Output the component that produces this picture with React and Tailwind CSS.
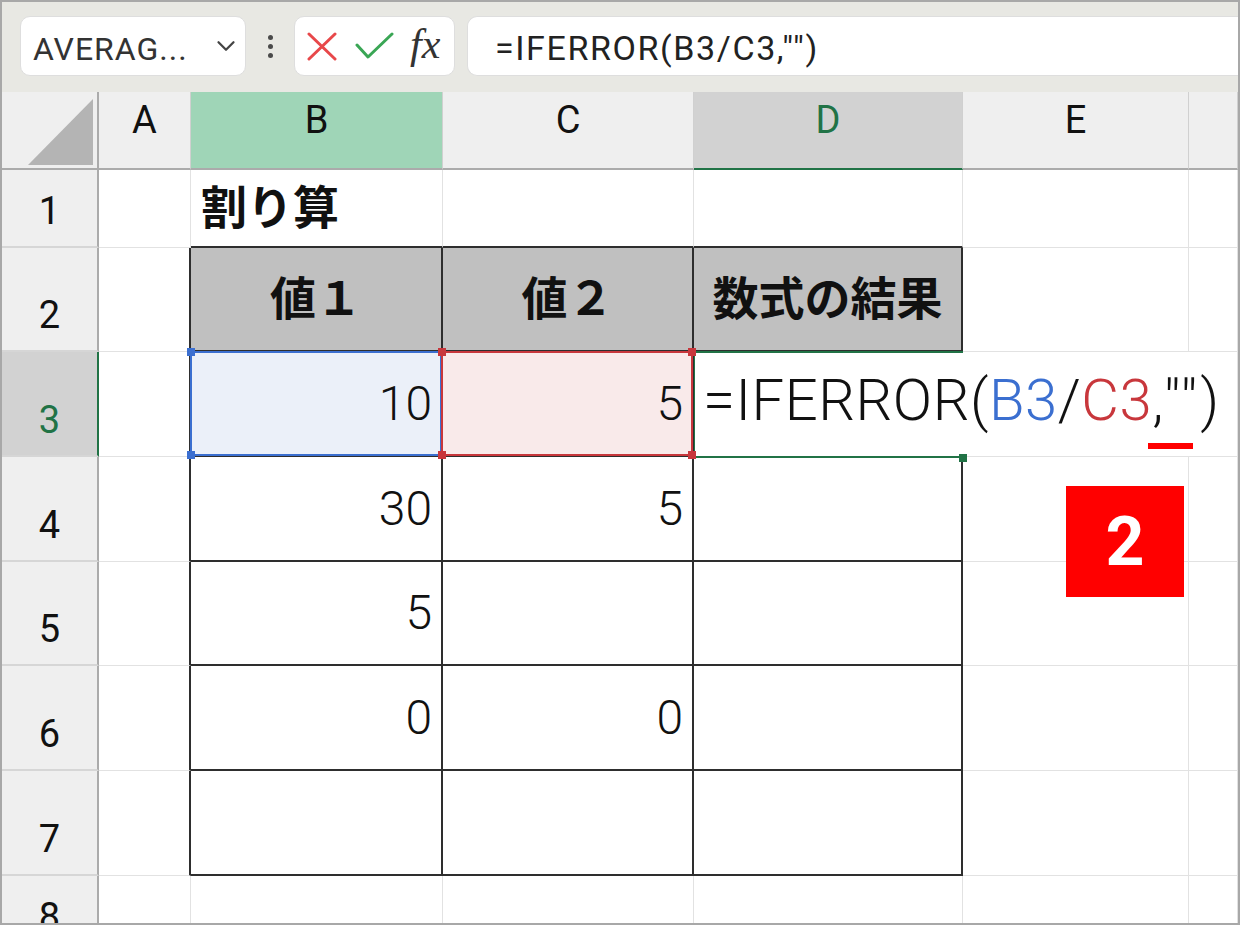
import React from 'react';

const GRID = 'border-r border-b border-[#e2e2e2]';
const BLK_R = 'border-r-2 border-r-[#2e2e2e]';
const BLK_B = 'border-b-2 border-b-[#2e2e2e]';
const GR_R = 'border-r border-r-[#e2e2e2]';
const GR_B = 'border-b border-b-[#e2e2e2]';

function RowHead({ n, active, last }) {
  return (
    <div
      className={`flex justify-center text-[38px] leading-none border-b-2 border-b-[#d6d6d6] ${
        active
          ? 'bg-[#d2d2d2] text-[#217346] border-r-2 border-r-[#217346]'
          : 'bg-[#efefef] text-[#111] border-r-2 border-r-[#ababab]'
      } ${last ? 'items-start pt-[22px] overflow-hidden' : 'items-end pb-[16px]'}`}
    >
      {n}
    </div>
  );
}

function ColHead({ l, cls = 'bg-[#efefef] text-[#111] border-b-2 border-b-[#ababab]' }) {
  return (
    <div className={`flex justify-center items-start pt-[9px] text-[38px] leading-none border-r border-r-[#d0d0d0] ${cls}`}>
      {l}
    </div>
  );
}

function Num({ v, cls = '' }) {
  return (
    <div className={`flex items-center justify-end pr-[9px] text-[48px] font-light leading-none text-[#111] ${cls}`}>{v}</div>
  );
}

function Sq({ cls }) {
  return <div className={`absolute w-[8px] h-[8px] z-30 ${cls}`} />;
}

export default function App() {
  return (
    <div className="w-[1240px] h-[925px] border-2 border-[#a8a8a8] bg-white overflow-hidden flex flex-col font-[Roboto,'Noto_Sans_CJK_JP',sans-serif]">
      {/* toolbar */}
      <div className="h-[90px] shrink-0 bg-[#e8e8e3] flex items-start pt-[14px] pl-[18px]">
        <div className="w-[226px] h-[60px] bg-white rounded-[10px] border border-[#dedede] flex items-center justify-between pl-[12px] pr-[4px]">
          <span className="text-[32px] tracking-[1px] leading-none text-[#333] pt-[6px]">AVERAG...</span>
          <svg width="30" height="30" viewBox="0 0 24 24" fill="none" stroke="#444" strokeWidth="1.8" strokeLinecap="round" strokeLinejoin="round">
            <path d="m6 9 6 6 6-6" />
          </svg>
        </div>
        <div className="w-[48px] h-[60px] flex flex-col items-center justify-center gap-[4px]">
          <div className="w-[5px] h-[5px] rounded-full bg-[#4a4a4a]" />
          <div className="w-[5px] h-[5px] rounded-full bg-[#4a4a4a]" />
          <div className="w-[5px] h-[5px] rounded-full bg-[#4a4a4a]" />
        </div>
        <div className="w-[161px] h-[60px] bg-white rounded-[10px] border border-[#dedede] flex items-center pl-[12px]">
          <svg width="30" height="30" viewBox="0 0 30 30" fill="none" stroke="#e8484a" strokeWidth="3" strokeLinecap="round">
            <path d="M2 3 L28 28 M28 3 L2 28" />
          </svg>
          <svg className="ml-[18px]" width="40" height="30" viewBox="0 0 40 30" fill="none" stroke="#3aa655" strokeWidth="3" strokeLinecap="round" strokeLinejoin="round">
            <path d="M2 14 L13 26 L37 3" />
          </svg>
          <span className="ml-[15px] text-[42px] leading-none italic text-[#333] font-['Liberation_Serif',serif] pb-[4px]">fx</span>
        </div>
        <div className="ml-[12px] flex-1 h-[60px] bg-white rounded-l-[10px] border border-r-0 border-[#dedede] flex items-center pl-[27px]">
          <span className="text-[34px] tracking-[1.6px] leading-none text-[#222] pt-[4px]">=IFERROR(B3/C3,"")</span>
        </div>
      </div>

      {/* grid */}
      <div className="flex-1 grid grid-cols-[97px_92px_252px_251px_269px_226px_1fr] grid-rows-[78px_78px_104px_105px_105px_104px_105px_105px_1fr]">
        {/* header row */}
        <div className="bg-[#efefef] border-r-2 border-r-[#ababab] border-b-2 border-b-[#ababab] flex items-end justify-end pr-[4px] pb-[3px]">
          <svg width="65" height="66" viewBox="0 0 65 66">
            <polygon points="65,0 65,66 0,66" fill="#b4b4b4" />
          </svg>
        </div>
        <ColHead l="A" />
        <ColHead l="B" cls="bg-[#9fd5b7] text-[#111] border-b-2 border-b-[#ababab]" />
        <ColHead l="C" />
        <ColHead l="D" cls="bg-[#d2d2d2] text-[#217346] border-b-2 border-b-[#217346]" />
        <ColHead l="E" />
        <ColHead l="" />

        {/* row 1 */}
        <RowHead n="1" />
        <div className={GRID} />
        <div className={`${GR_R} ${BLK_B} flex items-center pl-[10px] text-[46px] font-bold leading-none text-[#111]`}>割り算</div>
        <div className={`${GR_R} ${BLK_B}`} />
        <div className={`${GR_R} ${BLK_B}`} />
        <div className={GRID} />
        <div className={GRID} />

        {/* row 2 */}
        <RowHead n="2" />
        <div className={`${BLK_R} ${GR_B}`} />
        <div className={`${BLK_R} ${BLK_B} bg-[#c0c0c0] flex items-center justify-center text-[46px] font-bold leading-none text-[#111]`}>値１</div>
        <div className={`${BLK_R} ${BLK_B} bg-[#c0c0c0] flex items-center justify-center text-[46px] font-bold leading-none text-[#111]`}>値２</div>
        <div className={`${BLK_R} ${BLK_B} bg-[#c0c0c0] flex items-center justify-center text-[46px] font-bold leading-none text-[#111]`}>数式の結果</div>
        <div className={GRID} />
        <div className={GRID} />

        {/* row 3 */}
        <RowHead n="3" active />
        <div className={`${BLK_R} ${GR_B}`} />
        <div className={`relative z-[5] ${BLK_R} ${BLK_B} bg-[#ebf0f9] flex items-center justify-end pr-[9px] text-[48px] font-light leading-none text-[#111]`}>
          10
          <div className="absolute -left-[1px] -top-[1px] -right-[1px] -bottom-[1px] border-2 border-[#3b6fd0]" />
          <Sq cls="bg-[#3b6fd0] -left-[4px] -top-[4px]" />
          <Sq cls="bg-[#3b6fd0] -left-[4px] -bottom-[4px]" />
        </div>
        <div className={`relative z-20 ${BLK_R} ${BLK_B} bg-[#f9eaea] flex items-center justify-end pr-[9px] text-[48px] font-light leading-none text-[#111]`}>
          5
          <div className="absolute -left-[2px] -top-[1px] -right-[1px] -bottom-[1px] border-2 border-[#c8373c]" />
          <Sq cls="bg-[#c8373c] -left-[5px] -top-[4px]" />
          <Sq cls="bg-[#c8373c] -left-[5px] -bottom-[4px]" />
          <Sq cls="bg-[#c8373c] -right-[4px] -top-[4px]" />
          <Sq cls="bg-[#c8373c] -right-[4px] -bottom-[4px]" />
        </div>
        <div className="relative z-10 flex items-start pt-[19px] pl-[9px] whitespace-nowrap text-[58px] font-light tracking-[0.5px] leading-none text-[#111]">
          <span>
            =IFERROR(<span className="text-[#3b6fd0]">B3</span>/<span className="text-[#c8373c]">C3</span>,<span className="tracking-[3px]">""</span>)
          </span>
          <div className="absolute -left-[1px] -top-[1px] right-0 -bottom-[1px] border-t-2 border-b-2 border-l-2 border-[#217346]" />
          <div className="absolute -right-[4px] -bottom-[5px] w-[8px] h-[8px] bg-[#217346]" />
          <div className="absolute left-[454px] top-[91px] w-[45px] h-[6px] bg-[#ff0000]" />
        </div>
        <div className={GR_B} />
        <div className={GRID} />

        {/* row 4 */}
        <RowHead n="4" />
        <div className={`${BLK_R} ${GR_B}`} />
        <Num v="30" cls={`${BLK_R} ${BLK_B}`} />
        <Num v="5" cls={`${BLK_R} ${BLK_B}`} />
        <div className={`${BLK_R} ${BLK_B}`} />
        <div className={`relative ${GRID}`}>
          <div className="absolute left-[103px] top-[29px] w-[118px] h-[111px] bg-[#ff0000] flex items-center justify-center text-white font-bold text-[68px] leading-none z-10">
            2
          </div>
        </div>
        <div className={GRID} />

        {/* row 5 */}
        <RowHead n="5" />
        <div className={`${BLK_R} ${GR_B}`} />
        <Num v="5" cls={`${BLK_R} ${BLK_B}`} />
        <div className={`${BLK_R} ${BLK_B}`} />
        <div className={`${BLK_R} ${BLK_B}`} />
        <div className={GRID} />
        <div className={GRID} />

        {/* row 6 */}
        <RowHead n="6" />
        <div className={`${BLK_R} ${GR_B}`} />
        <Num v="0" cls={`${BLK_R} ${BLK_B}`} />
        <Num v="0" cls={`${BLK_R} ${BLK_B}`} />
        <div className={`${BLK_R} ${BLK_B}`} />
        <div className={GRID} />
        <div className={GRID} />

        {/* row 7 */}
        <RowHead n="7" />
        <div className={`${BLK_R} ${GR_B}`} />
        <div className={`${BLK_R} ${BLK_B}`} />
        <div className={`${BLK_R} ${BLK_B}`} />
        <div className={`${BLK_R} ${BLK_B}`} />
        <div className={GRID} />
        <div className={GRID} />

        {/* row 8 */}
        <RowHead n="8" last />
        <div className={GR_R} />
        <div className={GR_R} />
        <div className={GR_R} />
        <div className={GR_R} />
        <div className={GR_R} />
        <div className={GR_R} />
      </div>
    </div>
  );
}
